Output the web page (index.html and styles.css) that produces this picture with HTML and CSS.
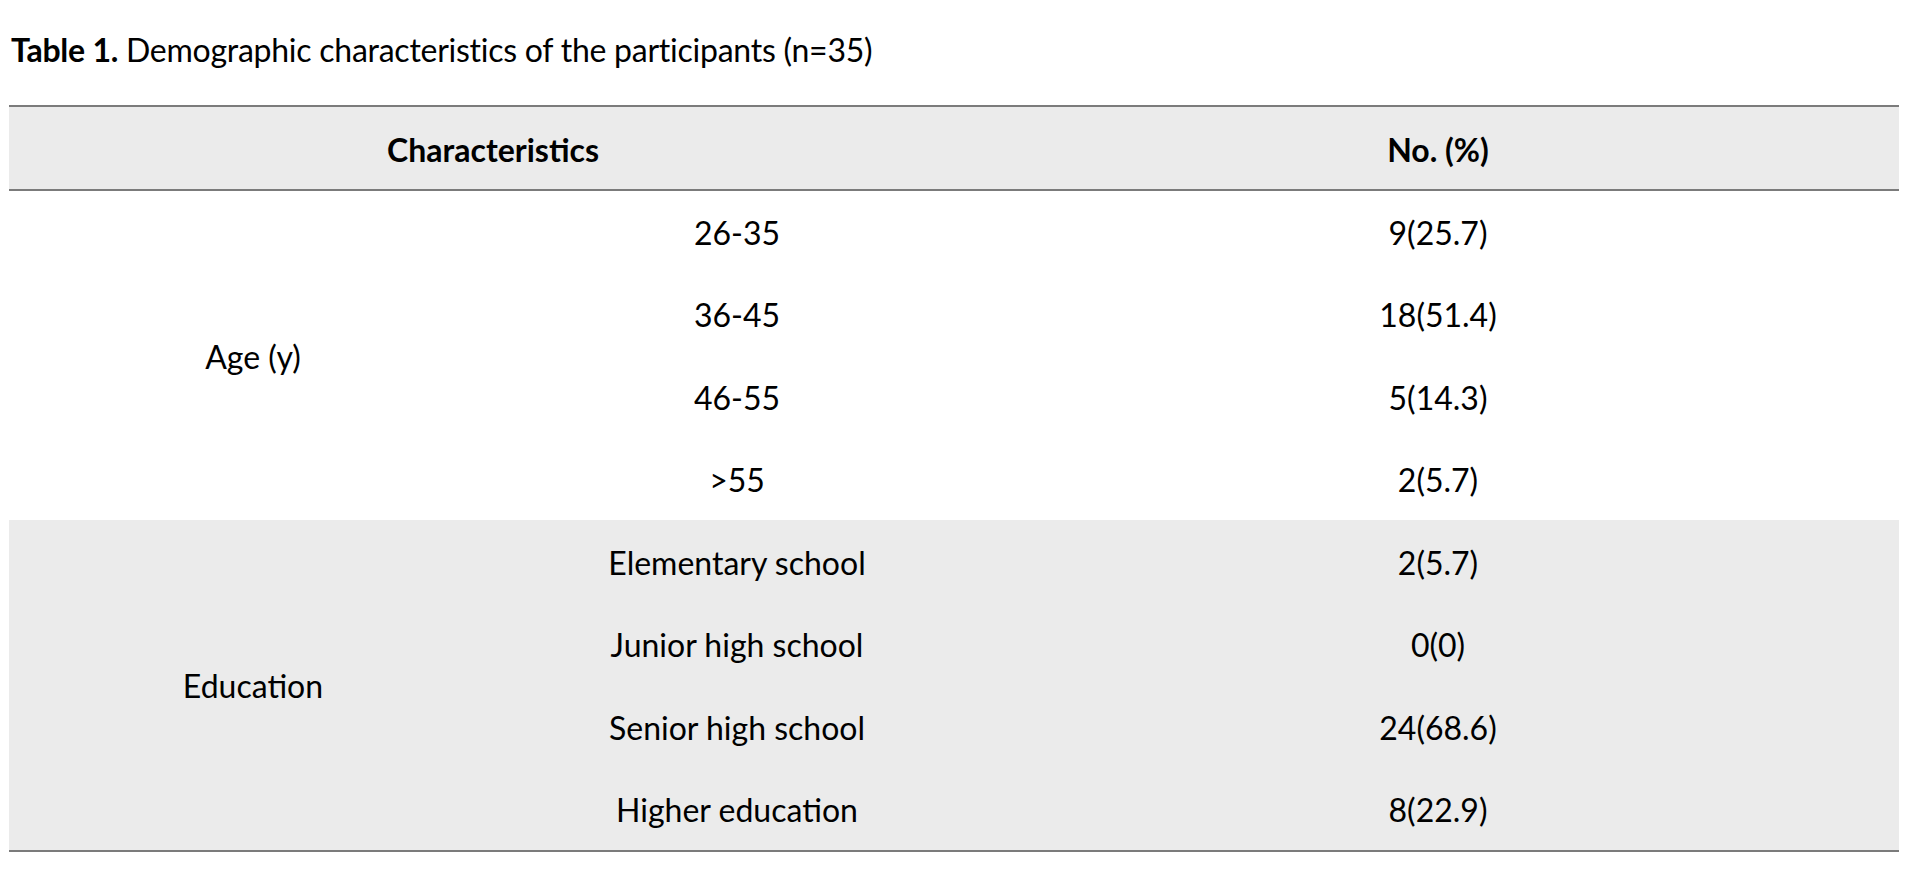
FILE: index.html
```html
<!DOCTYPE html>
<html lang="en">
<head>
<meta charset="utf-8">
<title>Table 1. Demographic characteristics of the participants</title>
<link rel="stylesheet" href="styles.css">
</head>
<body>
<div class="page">
  <p class="caption"><b>Table 1.</b> Demographic characteristics of the participants (n=35)</p>
  <table class="data">
    <colgroup>
      <col class="c1">
      <col class="c2">
      <col class="c3">
    </colgroup>
    <thead>
      <tr>
        <th colspan="2">Characteristics</th>
        <th>No. (%)</th>
      </tr>
    </thead>
    <tbody class="group">
      <tr><td rowspan="4">Age (y)</td><td>26-35</td><td>9(25.7)</td></tr>
      <tr><td>36-45</td><td>18(51.4)</td></tr>
      <tr><td>46-55</td><td>5(14.3)</td></tr>
      <tr><td>&gt;55</td><td>2(5.7)</td></tr>
    </tbody>
    <tbody class="group shaded">
      <tr><td rowspan="4">Education</td><td>Elementary school</td><td>2(5.7)</td></tr>
      <tr><td>Junior high school</td><td>0(0)</td></tr>
      <tr><td>Senior high school</td><td>24(68.6)</td></tr>
      <tr><td>Higher education</td><td>8(22.9)</td></tr>
    </tbody>
  </table>
</div>
</body>
</html>
```
FILE: styles.css
```css
html, body {
  margin: 0;
  padding: 0;
  background: #ffffff;
}

body {
  font-family: Lato, "Open Sans", "Liberation Sans", sans-serif;
  color: #000000;
  font-size: 32px;
}

.page {
  padding: 31px 21px 0 9px;
}

.caption {
  margin: 0 0 36px 2px;
  font-size: 32px;
  line-height: 1.2;
  letter-spacing: -0.25px;
  white-space: nowrap;
}

.caption b {
  font-weight: 700;
}

.data {
  width: 1890px;
  border-collapse: collapse;
  table-layout: fixed;
  border-top: 2px solid #7b7b7b;
  border-bottom: 2px solid #7b7b7b;
}

.c1 { width: 488px; }
.c2 { width: 480px; }
.c3 { width: 922px; }

.data th {
  height: 83.5px;
  padding: 4px 0 0 0;
  box-sizing: border-box;
  background: #ebebeb;
  border-bottom: 2px solid #7b7b7b;
  font-weight: 700;
  text-align: center;
  vertical-align: middle;
  line-height: 1.2;
}

.data td {
  height: 82.6px;
  padding: 3px 0 0 0;
  box-sizing: border-box;
  text-align: center;
  vertical-align: middle;
  font-weight: 400;
  line-height: 1.2;
}

.shaded td {
  background: #ebebeb;
}
```
